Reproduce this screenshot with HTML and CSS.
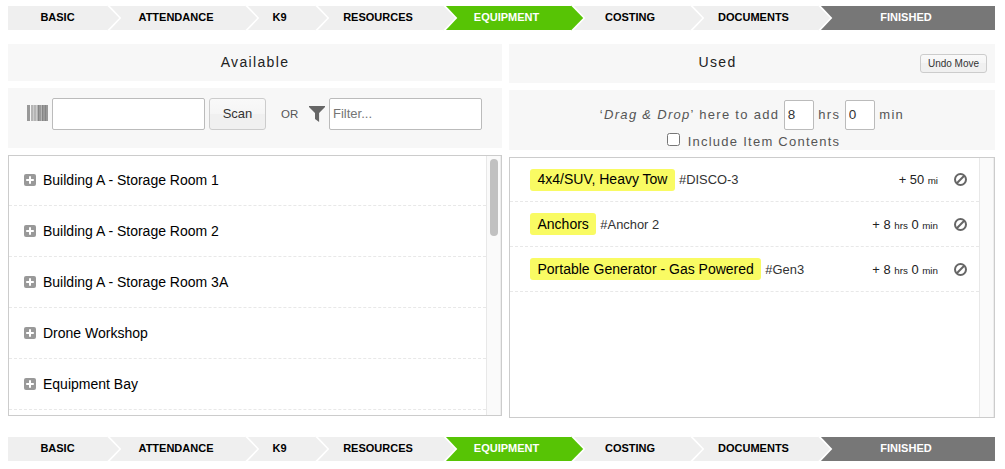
FILE: index.html
```html
<!DOCTYPE html>
<html lang="en">
<head>
<meta charset="utf-8">
<title>Equipment</title>
<link rel="stylesheet" href="styles.css">
</head>
<body>
<svg class="defs" width="0" height="0">
  <symbol id="chev" viewBox="0 0 16 26"><path class="edge" d="M0 0H2L14.3 13L2 26H0Z"/><path class="fill" d="M0 0.6L12.2 13L0 25.4Z"/></symbol>
  <symbol id="plus" viewBox="0 0 12 12"><rect width="12" height="12" rx="2" fill="#999"/><path d="M6 2.2V9.8M2.2 6H9.8" stroke="#fff" stroke-width="2"/></symbol>
  <symbol id="ban" viewBox="0 0 13 13"><circle cx="6.5" cy="6.5" r="5.5" fill="none" stroke="#666" stroke-width="2"/><path d="M2.8 10.2L10.2 2.8" stroke="#666" stroke-width="2"/></symbol>
</svg>
<nav class="steps">
  <a class="step basic">BASIC<svg class="chev"><use href="#chev"/></svg></a>
  <a class="step attendance">ATTENDANCE<svg class="chev"><use href="#chev"/></svg></a>
  <a class="step k9">K9<svg class="chev"><use href="#chev"/></svg></a>
  <a class="step resources">RESOURCES<svg class="chev"><use href="#chev"/></svg></a>
  <a class="step equipment">EQUIPMENT<svg class="chev"><use href="#chev"/></svg></a>
  <a class="step costing">COSTING<svg class="chev"><use href="#chev"/></svg></a>
  <a class="step documents">DOCUMENTS<svg class="chev"><use href="#chev"/></svg></a>
  <a class="step finished">FINISHED</a>
</nav>
<main class="columns">
  <section class="available">
    <h2 class="title">Available</h2>
    <div class="tools scan-tools">
      <svg class="barcode" width="21" height="16" viewBox="0 0 21 16"><path fill="#858585" d="M11 0h1v16h-1zM15 0h1v16h-1zM18 0h1v16h-1z"/><path fill="#999" d="M0 0h3v16H0zM12 0h2v16h-2zM16 0h2v16h-2zM19 0h2v16h-2z"/><path fill="#b5b5b5" d="M4 0h2v16H4zM7 0h2v16H7zM10 0h1v16h-1zM14 0h1v16h-1z"/><path fill="#ccc" d="M6 0h1v16H6zM9 0h1v16H9z"/></svg>
      <input class="field scan-field" type="text">
      <button class="btn scan-btn">Scan</button>
      <span class="or">OR</span>
      <svg class="funnel" width="16" height="16" viewBox="0 0 16 16"><path fill="#666" d="M0 0H16V1L10.1 7V16L6 13V7L0 1Z"/></svg>
      <input class="field filter-field" type="text" placeholder="Filter...">
    </div>
    <div class="list">
      <ul class="rows">
        <li class="place"><svg class="plus"><use href="#plus"/></svg>Building A - Storage Room 1</li>
        <li class="place"><svg class="plus"><use href="#plus"/></svg>Building A - Storage Room 2</li>
        <li class="place"><svg class="plus"><use href="#plus"/></svg>Building A - Storage Room 3A</li>
        <li class="place"><svg class="plus"><use href="#plus"/></svg>Drone Workshop</li>
        <li class="place"><svg class="plus"><use href="#plus"/></svg>Equipment Bay</li>
      </ul>
      <div class="track"><div class="thumb"></div></div>
    </div>
  </section>
  <section class="used">
    <div class="title used-title"><h2 class="used-name">Used</h2><button class="btn undo">Undo Move</button></div>
    <div class="tools drop-tools">
      <div class="drop-line"><span class="hint">‘<em>Drag &amp; Drop</em>’ here to add</span><input class="field num" value="8"><span class="unit">hrs</span><input class="field num" value="0"><span class="unit">min</span></div>
      <label class="include"><input class="check" type="checkbox"><span>Include Item Contents</span></label>
    </div>
    <div class="list">
      <ul class="rows">
        <li class="item"><span class="name">4x4/SUV, Heavy Tow</span><span class="tag">#DISCO-3</span><span class="amount">+ 50 <small>mi</small></span><svg class="ban"><use href="#ban"/></svg></li>
        <li class="item"><span class="name">Anchors</span><span class="tag">#Anchor 2</span><span class="amount">+ 8 <small>hrs</small> 0 <small>min</small></span><svg class="ban"><use href="#ban"/></svg></li>
        <li class="item"><span class="name">Portable Generator - Gas Powered</span><span class="tag">#Gen3</span><span class="amount">+ 8 <small>hrs</small> 0 <small>min</small></span><svg class="ban"><use href="#ban"/></svg></li>
      </ul>
      <div class="track"></div>
    </div>
  </section>
</main>
<nav class="steps">
  <a class="step basic">BASIC<svg class="chev"><use href="#chev"/></svg></a>
  <a class="step attendance">ATTENDANCE<svg class="chev"><use href="#chev"/></svg></a>
  <a class="step k9">K9<svg class="chev"><use href="#chev"/></svg></a>
  <a class="step resources">RESOURCES<svg class="chev"><use href="#chev"/></svg></a>
  <a class="step equipment">EQUIPMENT<svg class="chev"><use href="#chev"/></svg></a>
  <a class="step costing">COSTING<svg class="chev"><use href="#chev"/></svg></a>
  <a class="step documents">DOCUMENTS<svg class="chev"><use href="#chev"/></svg></a>
  <a class="step finished">FINISHED</a>
</nav>
</body>
</html>
```
FILE: styles.css
```css
* { box-sizing: border-box; }
body { margin: 0; padding: 6px 10px 0 8px; background: #fff; color: #000; font-family: "Liberation Sans", Arial, sans-serif; overflow: hidden; }
.defs { display: block; }
.steps { display: flex; height: 24px; font-size: 11px; font-weight: bold; line-height: 23px; }
.step { position: relative; flex: none; text-align: center; background: #efefef; color: #000; fill: #efefef; }
.basic { width: 99px; }
.attendance { width: 138px; }
.k9 { width: 70px; padding-right: 1px; }
.resources { width: 128px; padding-right: 2px; }
.equipment { width: 128px; padding-right: 1px; background: #57c405; color: #fff; fill: #57c405; }
.costing { width: 119px; padding-right: 1px; }
.documents { width: 128px; padding-right: 1px; }
.finished { flex: 1; padding-right: 1px; background: #777; color: #fff; }
.chev { position: absolute; z-index: 1; left: 100%; top: -1px; width: 16px; height: 26px; }
.edge { fill: #fff; }
.fill { fill: inherit; }
.columns { display: grid; grid-template-columns: 494px 486px; column-gap: 7px; height: 374px; margin: 14px 0 19px; align-items: start; }
.title { display: flex; align-items: center; justify-content: center; height: 37px; margin: 0 0 7px; padding-bottom: 2px; background: #f7f7f7; color: #222; font-size: 14px; font-weight: normal; letter-spacing: 1.35px; }
.used-title { position: relative; height: 39px; }
.used-name { flex: 1; margin: 0; padding: 0 69px 1px 0; text-align: center; font-size: 14px; font-weight: normal; }
.btn { padding: 0; border: 1px solid #ccc; border-radius: 3px; background: linear-gradient(#f9f9f9 0%, #f5f5f5 50%, #f0f0f0 50%, #f0f0f0 100%); color: #333; font-family: inherit; }
.undo { position: absolute; right: 8px; top: 10px; width: 67px; height: 19px; font-size: 10px; letter-spacing: 0; }
.tools { height: 60px; margin-bottom: 7px; background: #f7f7f7; color: #555; }
.scan-tools { display: flex; align-items: flex-start; padding: 10px 0 0 19px; }
.barcode { margin-top: 7px; }
.field { height: 32px; padding: 0 3px; border: 1px solid #bbb; border-radius: 2px; background: #fff; color: #333; font-family: inherit; font-size: 13px; outline: 0; }
.field::placeholder { color: #757575; }
.scan-field { width: 153px; margin-left: 4px; }
.scan-btn { width: 57px; height: 32px; margin-left: 4px; padding-bottom: 1px; font-size: 13px; }
.or { width: 17px; margin: 10px 0 0 15px; font-size: 11.5px; }
.funnel { margin: 8px 4px 0 11px; }
.filter-field { width: 153px; padding-bottom: 2px; }
.drop-tools { padding-top: 10px; font-size: 13px; letter-spacing: 1.3px; }
.drop-line { display: flex; align-items: center; justify-content: center; gap: 4.5px; height: 30px; }
.hint, .unit { padding-bottom: 1px; }
.num { width: 30px; height: 30px; padding: 0 3px 1px; font-size: 13.5px; }
.include { display: flex; align-items: center; justify-content: center; gap: 8px; margin-top: 3px; padding-left: 3px; line-height: 17px; letter-spacing: 1.25px; }
.check { width: 13px; height: 13px; margin: -4px 0 0; }
.list { display: flex; height: 261px; border: 1px solid #ccc; overflow: hidden; }
.rows { flex: 1; margin: 0; padding: 0; list-style: none; }
.track { width: 15px; padding: 3px 2px 0 3px; border-left: 1px solid #e8e8e8; background: #fafafa; border-right: 1px solid #ededed; }
.thumb { width: 8px; height: 77px; border-radius: 4px; background: #c1c1c1; }
.place { display: flex; align-items: center; height: 51px; padding-left: 15px; border-bottom: 1px dashed #e8e8e8; font-size: 14px; }
.place:first-child { height: 50px; line-height: 18px; padding-bottom: 1px; }
.place:first-child .plus { margin-top: 0; }
.plus { width: 12px; height: 12px; margin: -1px 7px 0 0; }
.item { display: flex; align-items: center; height: 45px; padding: 0 12px 0 20px; border-bottom: 1px dashed #e8e8e8; color: #333; }
.item:first-child { height: 44px; }
.name { height: 22px; padding: 0 7.5px; border-radius: 3px; background: #f9fb63; color: #000; font-size: 14px; line-height: 22px; }
.item:first-child .name { line-height: 21px; }
.tag { margin-left: 4px; font-size: 12.9px; }
.amount { margin-left: auto; color: #222; font-size: 12.9px; }
.amount small { font-size: 9.8px; }
.ban { width: 13px; height: 13px; margin-left: 16px; }
```
